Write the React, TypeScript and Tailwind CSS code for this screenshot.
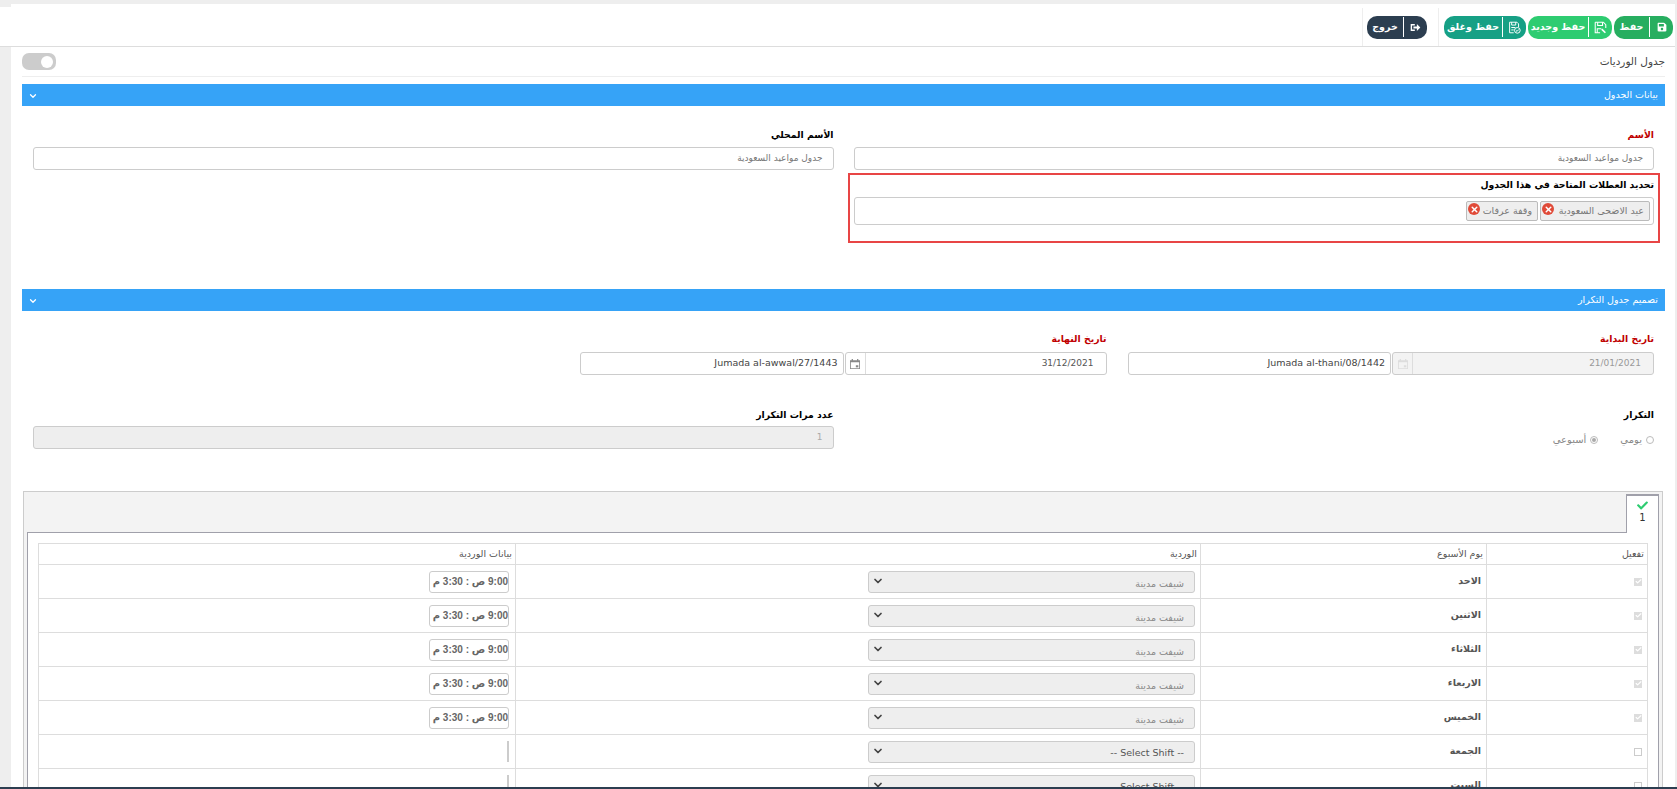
import React from 'react';
import { ChevronDown, Check, X } from 'lucide-react';
import { FaSave, FaCheck } from 'react-icons/fa';

const FONT = "font-['DejaVu_Sans',sans-serif]";

const SaveNewIcon = () => (
  <svg viewBox="0 0 16 16" className="w-[13px] h-[13px]" fill="none" stroke="currentColor" strokeWidth="1.3">
    <path d="M1.500 1.500h10l3 3v4M1.500 1.500v13h6" />
    <path d="M4.500 1.500v4h6v-4M4 14.500v-5h5" />
    <path d="M9.500 10l4.500 4.500" strokeWidth="2" />
  </svg>
);

const SaveCloseIcon = () => (
  <svg viewBox="0 0 16 16" className="w-[13px] h-[13px]" fill="none" stroke="currentColor" strokeWidth="1.2">
    <path d="M2 1.500h9l2 2v4M2 1.500v13h5" />
    <path d="M4.500 1.500v3.500h5v-3.500M4 8h5M4 11h3" />
    <circle cx="11.500" cy="11.500" r="3.500" />
    <path d="M9.800 11.500l1.300 1.300 2.200-2.400" />
  </svg>
);

const ExitIcon = () => (
  <svg viewBox="0 0 16 16" className="w-[11px] h-[11px]" fill="currentColor">
    <path d="M1 3h6v2H3v6h4v2H1z" />
    <path d="M5 6.500h5V3l5 5-5 5V9.500H5z" />
  </svg>
);

const CalendarIcon = () => (
  <svg viewBox="0 0 12 12" className="w-[10px] h-[10px]" fill="currentColor">
    <path d="M2 0h1.500v1.500h5V0H10v1.500h2V12H0V1.500h2zM1 4v7h10V4z" />
    <path d="M7 7.500h3V10H7z" />
  </svg>
);

const ActionButton = ({ label, icon, color, width }: { label: string; icon: React.ReactNode; color: string; width: string }) => (
  <button className={`${color} ${width} h-[23px] rounded-[10px] text-white flex items-center shrink-0`}>
    <span className="w-[23px] flex justify-center">{icon}</span>
    <span className="h-[20px] w-px bg-white" />
    <span className="flex-1 text-center text-[9.500px] font-bold whitespace-nowrap">{label}</span>
  </button>
);

const Section = ({ title }: { title: string }) => (
  <div className="h-[22px] bg-[#36a3f7] text-white flex items-center justify-between pr-[7px] pl-[6px]">
    <span className="text-[9.500px]">{title}</span>
    <ChevronDown className="w-[10px] h-[10px] mt-[2px]" strokeWidth={3} />
  </div>
);

const Label = ({ text, red }: { text: string; red?: boolean }) => (
  <div className={`text-[9.300px] leading-[14px] font-bold ${red ? 'text-[#c00000]' : 'text-black'}`}>{text}</div>
);

const TextBox = ({ value, className }: { value: string; className?: string }) => (
  <div className={`h-[23px] border border-[#ccc] rounded-[3px] flex items-center px-[10px] text-[9px] ${className ?? 'bg-white text-[#777]'}`}>
    {value}
  </div>
);

const Token = ({ text, width }: { text: string; width: string }) => (
  <div className={`${width} h-[20px] border border-[#bbb] rounded-[2px] bg-[#eee] flex items-center justify-between pr-[2px] pl-[1px] text-[9.500px] text-[#777]`}>
    <span className="pr-[3px] whitespace-nowrap">{text}</span>
    <span className="w-[12px] h-[12px] -mt-[4px] rounded-full bg-[#e04a38] flex items-center justify-center shrink-0">
      <X className="w-[9px] h-[9px] text-white" strokeWidth={4} />
    </span>
  </div>
);

const DateGroup = ({ date, hijri, disabled }: { date: string; hijri: string; disabled?: boolean }) => (
  <div className="flex gap-px">
    <div className={`w-[262px] h-[23px] border border-[#ccc] rounded-[3px] flex items-center ${disabled ? 'bg-[#f3f3f3] text-[#999]' : 'bg-white text-[#555]'}`}>
      <span className="flex-1 pr-[12px] text-[9px]">{date}</span>
      <span className={`w-[20px] h-full border-r border-[#ddd] flex items-center justify-center ${disabled ? 'text-[#ddd]' : 'text-[#888]'}`}>
        <CalendarIcon />
      </span>
    </div>
    <div className="flex-1 h-[23px] border border-[#ccc] rounded-[3px] bg-white flex items-center pr-[5px] text-[9.500px] text-[#444]">
      {hijri}
    </div>
  </div>
);

const Radio = ({ text, checked }: { text: string; checked?: boolean }) => (
  <span className="flex items-center gap-[4px] text-[10px] text-[#888]">
    <span className="w-[8px] h-[8px] rounded-full border border-[#bbb] flex items-center justify-center">
      {checked && <span className="w-[4px] h-[4px] rounded-full bg-[#aaa]" />}
    </span>
    {text}
  </span>
);

const days = [
  { name: 'الاحد', on: true },
  { name: 'الاثنين', on: true },
  { name: 'الثلاثاء', on: true },
  { name: 'الاربعاء', on: true },
  { name: 'الخميس', on: true },
  { name: 'الجمعة', on: false },
  { name: 'السبت', on: false },
];

const DayRow = ({ name, on }: { name: string; on: boolean }) => (
  <tr className="h-[34px]">
    <td className="border border-[#ddd] pr-[5px] align-middle">
      {on ? (
        <span className="flex w-[8px] h-[8px] bg-[#ddd] items-center justify-center">
          <Check className="w-[7px] h-[7px] text-white" strokeWidth={4} />
        </span>
      ) : (
        <span className="block w-[8px] h-[8px] border border-[#ccc] bg-white" />
      )}
    </td>
    <td className="border border-[#ddd] pr-[5px] text-[9.500px] font-bold text-[#555]">{name}</td>
    <td className="border border-[#ddd] pr-[5px]">
      <div className="w-[327px] h-[22px] border border-[#ccc] rounded-[3px] bg-[#eee] flex justify-between overflow-hidden pr-[10px] pl-[3px]">
        <span className={`text-[9.500px] leading-[12px] h-[17px] overflow-hidden ${on ? 'pt-[6px] text-[#888]' : 'pt-[5px] text-[#555]'}`}>
          {on ? 'شيفت مدينة' : '-- Select Shift --'}
        </span>
        <ChevronDown className="w-[12px] h-[12px] mt-[3px] text-[#444]" strokeWidth={3.500} />
      </div>
    </td>
    <td className="border border-[#ddd] pr-[6px]">
      {on ? (
        <div className="w-[80px] h-[22px] border border-[#ccc] rounded-[3px] bg-white flex items-center overflow-hidden text-[10px] font-bold font-['Liberation_Sans','DejaVu_Sans',sans-serif] text-[#666] whitespace-nowrap">
          9:00 ص : 3:30 م
        </div>
      ) : (
        <div className="w-[2px] h-[21px] bg-[#ccc]" />
      )}
    </td>
  </tr>
);

export default function App() {
  return (
    <div dir="rtl" className={`${FONT} h-[789px] overflow-hidden bg-[#eee] flex flex-col`}>
      <header className="mt-[4px] bg-white mr-[2px] h-[43px] border-b border-[#ddd] flex flex-col">
        <div className="h-[3px] w-[11px] bg-[#eee] self-end" />
        <div className="flex items-center pr-[2px] mt-[1px]">
          <div className="flex items-center h-[38px] gap-[2px] pl-[5px] border-l border-[#eee]">
            <ActionButton label="حفظ" color="bg-[#27ae60]" width="w-[59px]" icon={<FaSave className="w-[10px] h-[10px]" />} />
            <ActionButton label="حفظ وجديد" color="bg-[#2ecc71]" width="w-[84px]" icon={<SaveNewIcon />} />
            <ActionButton label="حفظ وغلق" color="bg-[#16a085]" width="w-[82px]" icon={<SaveCloseIcon />} />
          </div>
          <div className="flex items-center h-[38px] pr-[11px] pl-[4px] border-l border-[#eee]">
            <ActionButton label="خروج" color="bg-[#2c3e50]" width="w-[60px]" icon={<ExitIcon />} />
          </div>
        </div>
      </header>

      <main className="flex-1 min-h-0 overflow-hidden bg-white ml-[11px] mr-[2px] pl-[11px] pr-[10px]">
        <div className="h-[30px] border-b border-[#eee] flex items-center justify-between text-[#444]">
          <span className="text-[10.500px]">جدول الورديات</span>
          <span className="w-[34px] h-[17px] rounded-[7px] bg-[#ccc] flex items-center justify-start pr-[3px]">
            <span className="w-[12px] h-[12px] rounded-full bg-white" />
          </span>
        </div>

        <div className="mt-[7px]">
          <Section title="بيانات الجدول" />
        </div>

        <div className="grid grid-cols-2 gap-x-[20px] px-[11px] pt-[22px]">
          <div>
            <Label text="الأسم" red />
            <TextBox value="جدول مواعيد السعودية" className="mt-[5px] bg-white text-[#777]" />
            <div className="-mx-[6px] mt-[3px] h-[70px] border-2 border-[#e84545] px-[4px] pt-[3px]">
              <Label text="تحديد العطلات المتاحة في هذا الجدول" />
              <div className="mt-[5px] h-[28px] border border-[#ccc] rounded-[3px] flex items-center gap-[2px] pr-[3px]">
                <Token text="عيد الاضحى السعودية" width="w-[110px]" />
                <Token text="وقفة عرفات" width="w-[72px]" />
              </div>
            </div>
          </div>
          <div>
            <Label text="الأسم المحلي" />
            <TextBox value="جدول مواعيد السعودية" className="mt-[5px] bg-white text-[#777]" />
          </div>
        </div>

        <div className="mt-[46px]">
          <Section title="تصميم جدول التكرار" />
        </div>

        <div className="grid grid-cols-2 gap-x-[21px] pr-[11px] pl-[558px] pt-[21px]">
          <div>
            <Label text="تاريخ البداية" red />
            <div className="mt-[6px]">
              <DateGroup date="21/01/2021" hijri="Jumada al-thani/08/1442" disabled />
            </div>
          </div>
          <div>
            <Label text="تاريخ النهاية" red />
            <div className="mt-[6px]">
              <DateGroup date="31/12/2021" hijri="Jumada al-awwal/27/1443" />
            </div>
          </div>
        </div>

        <div className="grid grid-cols-2 gap-x-[20px] px-[11px] pt-[33px]">
          <div>
            <Label text="التكرار" />
            <div className="flex gap-[22px] mt-[10px]">
              <Radio text="يومي" />
              <Radio text="أسبوعي" checked />
            </div>
          </div>
          <div>
            <Label text="عدد مرات التكرار" />
            <TextBox value="1" className="mt-[4px] bg-[#eee] text-[#aaa]" />
          </div>
        </div>

        <div className="mt-[42px] ml-[1px] mr-[2px] border border-[#ccc] bg-[#f3f3f3]">
          <div className="h-[40px] flex items-end pr-[3px]">
            <div className="relative -mb-px w-[33px] h-[39px] border border-t-2 border-[#a0a0aa] border-b-0 bg-white flex flex-col items-center pt-[4px] z-10">
              <FaCheck className="w-[11px] h-[11px] text-[#2ecc71]" />
              <span className="text-[10px] leading-[14px] text-[#333]">1</span>
            </div>
          </div>
          <div className="mx-[3px] border border-[#a0a0aa] bg-white px-[10px] pt-[10px] pb-[10px]">
            <table className="w-full table-fixed border-collapse text-right">
              <colgroup>
                <col className="w-[161px]" />
                <col className="w-[286px]" />
                <col className="w-[685px]" />
                <col />
              </colgroup>
              <thead>
                <tr className="h-[21px] text-[9.500px] text-[#555]">
                  <th className="border border-[#ddd] pr-[3px] font-normal">تفعيل</th>
                  <th className="border border-[#ddd] pr-[3px] font-normal">يوم الأسبوع</th>
                  <th className="border border-[#ddd] pr-[3px] font-normal">الوردية</th>
                  <th className="border border-[#ddd] pr-[3px] font-normal">بيانات الوردية</th>
                </tr>
              </thead>
              <tbody>
                {days.map((d) => (
                  <DayRow key={d.name} name={d.name} on={d.on} />
                ))}
              </tbody>
            </table>
          </div>
        </div>
      </main>

      <footer className="h-[2px] bg-[#2c3e50] shrink-0" />
    </div>
  );
}
